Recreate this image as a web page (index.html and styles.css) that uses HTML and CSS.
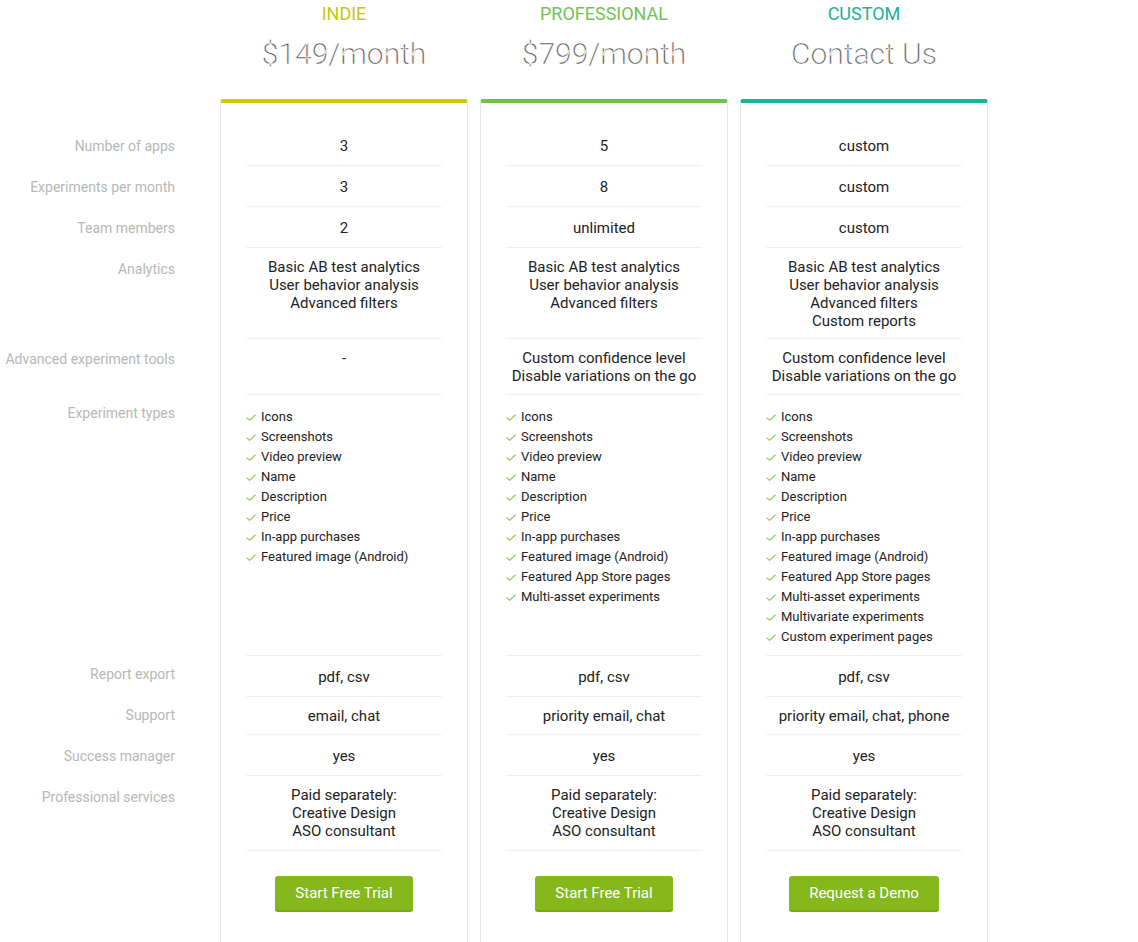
FILE: index.html
```html
<!DOCTYPE html>
<html lang="en">
<head>
<meta charset="utf-8">
<title>Pricing</title>
<link rel="stylesheet" href="styles.css">
</head>
<body>
<div class="pricing">
  <div class="labels">
    <div class="row r-s">Number of apps</div>
    <div class="row r-s">Experiments per month</div>
    <div class="row r-s">Team members</div>
    <div class="row r-an">Analytics</div>
    <div class="row r-tools">Advanced experiment tools</div>
    <div class="row r-types">Experiment types</div>
    <div class="row r-s r-low">Report export</div>
    <div class="row r-sup r-low">Support</div>
    <div class="row r-s">Success manager</div>
    <div class="row r-pro">Professional services</div>
  </div>

  <div class="plan indie">
    <div class="plan-head">
      <div class="plan-name">INDIE</div>
      <div class="plan-price">$149/month</div>
    </div>
    <div class="card">
      <div class="row r-s">3</div>
      <div class="row r-s">3</div>
      <div class="row r-s">2</div>
      <div class="row r-an">Basic AB test analytics<br>User behavior analysis<br>Advanced filters</div>
      <div class="row r-tools">-</div>
      <div class="row r-types">
        <ul class="checks">
          <li>Icons</li><li>Screenshots</li><li>Video preview</li><li>Name</li><li>Description</li><li>Price</li><li>In-app purchases</li><li>Featured image (Android)</li>
        </ul>
      </div>
      <div class="row r-s">pdf, csv</div>
      <div class="row r-sup">email, chat</div>
      <div class="row r-s">yes</div>
      <div class="row r-pro">Paid separately:<br>Creative Design<br>ASO consultant</div>
      <div class="cta"><a class="btn" href="#">Start Free Trial</a></div>
    </div>
  </div>

  <div class="plan pro">
    <div class="plan-head">
      <div class="plan-name">PROFESSIONAL</div>
      <div class="plan-price">$799/month</div>
    </div>
    <div class="card">
      <div class="row r-s">5</div>
      <div class="row r-s">8</div>
      <div class="row r-s">unlimited</div>
      <div class="row r-an">Basic AB test analytics<br>User behavior analysis<br>Advanced filters</div>
      <div class="row r-tools">Custom confidence level<br>Disable variations on the go</div>
      <div class="row r-types">
        <ul class="checks">
          <li>Icons</li><li>Screenshots</li><li>Video preview</li><li>Name</li><li>Description</li><li>Price</li><li>In-app purchases</li><li>Featured image (Android)</li><li>Featured App Store pages</li><li>Multi-asset experiments</li>
        </ul>
      </div>
      <div class="row r-s">pdf, csv</div>
      <div class="row r-sup">priority email, chat</div>
      <div class="row r-s">yes</div>
      <div class="row r-pro">Paid separately:<br>Creative Design<br>ASO consultant</div>
      <div class="cta"><a class="btn" href="#">Start Free Trial</a></div>
    </div>
  </div>

  <div class="plan custom">
    <div class="plan-head">
      <div class="plan-name">CUSTOM</div>
      <div class="plan-price">Contact Us</div>
    </div>
    <div class="card">
      <div class="row r-s">custom</div>
      <div class="row r-s">custom</div>
      <div class="row r-s">custom</div>
      <div class="row r-an">Basic AB test analytics<br>User behavior analysis<br>Advanced filters<br>Custom reports</div>
      <div class="row r-tools">Custom confidence level<br>Disable variations on the go</div>
      <div class="row r-types">
        <ul class="checks">
          <li>Icons</li><li>Screenshots</li><li>Video preview</li><li>Name</li><li>Description</li><li>Price</li><li>In-app purchases</li><li>Featured image (Android)</li><li>Featured App Store pages</li><li>Multi-asset experiments</li><li>Multivariate experiments</li><li>Custom experiment pages</li>
        </ul>
      </div>
      <div class="row r-s">pdf, csv</div>
      <div class="row r-sup">priority email, chat, phone</div>
      <div class="row r-s">yes</div>
      <div class="row r-pro">Paid separately:<br>Creative Design<br>ASO consultant</div>
      <div class="cta"><a class="btn" href="#">Request a Demo</a></div>
    </div>
  </div>
</div>
</body>
</html>
```

FILE: styles.css
```css
html, body {
  margin: 0;
  padding: 0;
  background: #fff;
  font-family: Roboto, "Liberation Sans", Arial, sans-serif;
  color: #222;
}

.pricing {
  display: flex;
  align-items: flex-start;
  gap: 12px;
}

.labels {
  width: 176px;
  margin-right: 32px;
  padding-top: 125px;
  text-align: right;
  font-size: 14px;
  line-height: 18px;
  color: #b8b8b8;
}

.labels .row {
  box-sizing: border-box;
  padding-top: 12px;
  padding-right: 1px;
}

.labels .r-tools { padding-top: 11px; }
.labels .r-types, .labels .r-low { padding-top: 9px; }

.plan {
  width: 248px;
}

.plan-head {
  text-align: center;
  height: 99px;
}

.plan-name {
  font-size: 18px;
  line-height: 28px;
  text-transform: uppercase;
}

.plan-price {
  margin-top: 6px;
  font-size: 30px;
  line-height: 40px;
  font-weight: 300;
  color: #4d4d4d;
  -webkit-text-stroke: 0.55px #fff;
}

.indie .plan-name { color: #c8c808; }
.pro .plan-name { color: #72c355; }
.custom .plan-name { color: #1bb298; }

.card {
  box-sizing: border-box;
  border: 1px solid #e8e8e8;
  border-top: 4px solid #ccc;
  border-radius: 3px 3px 0 0;
  padding: 22px 25px 60px;
  min-height: 860px;
}

.indie .card { border-top-color: #cccc00; }
.pro .card { border-top-color: #6cc24a; }
.custom .card { border-top-color: #1ab394; }

.card .row {
  box-sizing: border-box;
  border-bottom: 1px solid #f0f0f0;
  text-align: center;
  font-size: 15px;
  line-height: 18px;
  padding-top: 12px;
}

.card .r-an, .card .r-sup, .card .r-pro { padding-top: 10px; }
.card .r-tools { padding-top: 10px; }
.card .r-types { padding-top: 12px; }

.r-s { height: 41px; }
.r-an { height: 91px; }
.r-tools { height: 56px; }
.r-types { height: 261px; }
.r-sup { height: 38px; }
.r-pro { height: 75px; }

.checks {
  list-style: none;
  margin: 0;
  padding: 0;
  text-align: left;
  font-size: 13px;
  line-height: 20px;
}

.checks li {
  display: flex;
  align-items: center;
  gap: 5px;
}

.checks li::before {
  content: "";
  width: 10px;
  height: 7px;
  flex: none;
  background: url("data:image/svg+xml;utf8,<svg xmlns='http://www.w3.org/2000/svg' width='10' height='7' viewBox='0 0 10 7'><polyline points='0.6,3.6 3.6,6.3 9.6,0.7' fill='none' stroke='%2395cc5e' stroke-width='1.2'/></svg>") no-repeat center;
}

.cta {
  text-align: center;
  padding-top: 25px;
}

.btn {
  display: inline-block;
  box-sizing: border-box;
  height: 36px;
  padding: 0 20px;
  line-height: 35px;
  font-size: 15px;
  color: #fff;
  text-decoration: none;
  background: #85b81b;
  border-bottom: 2px solid #76a616;
  border-radius: 3px;
}
```
